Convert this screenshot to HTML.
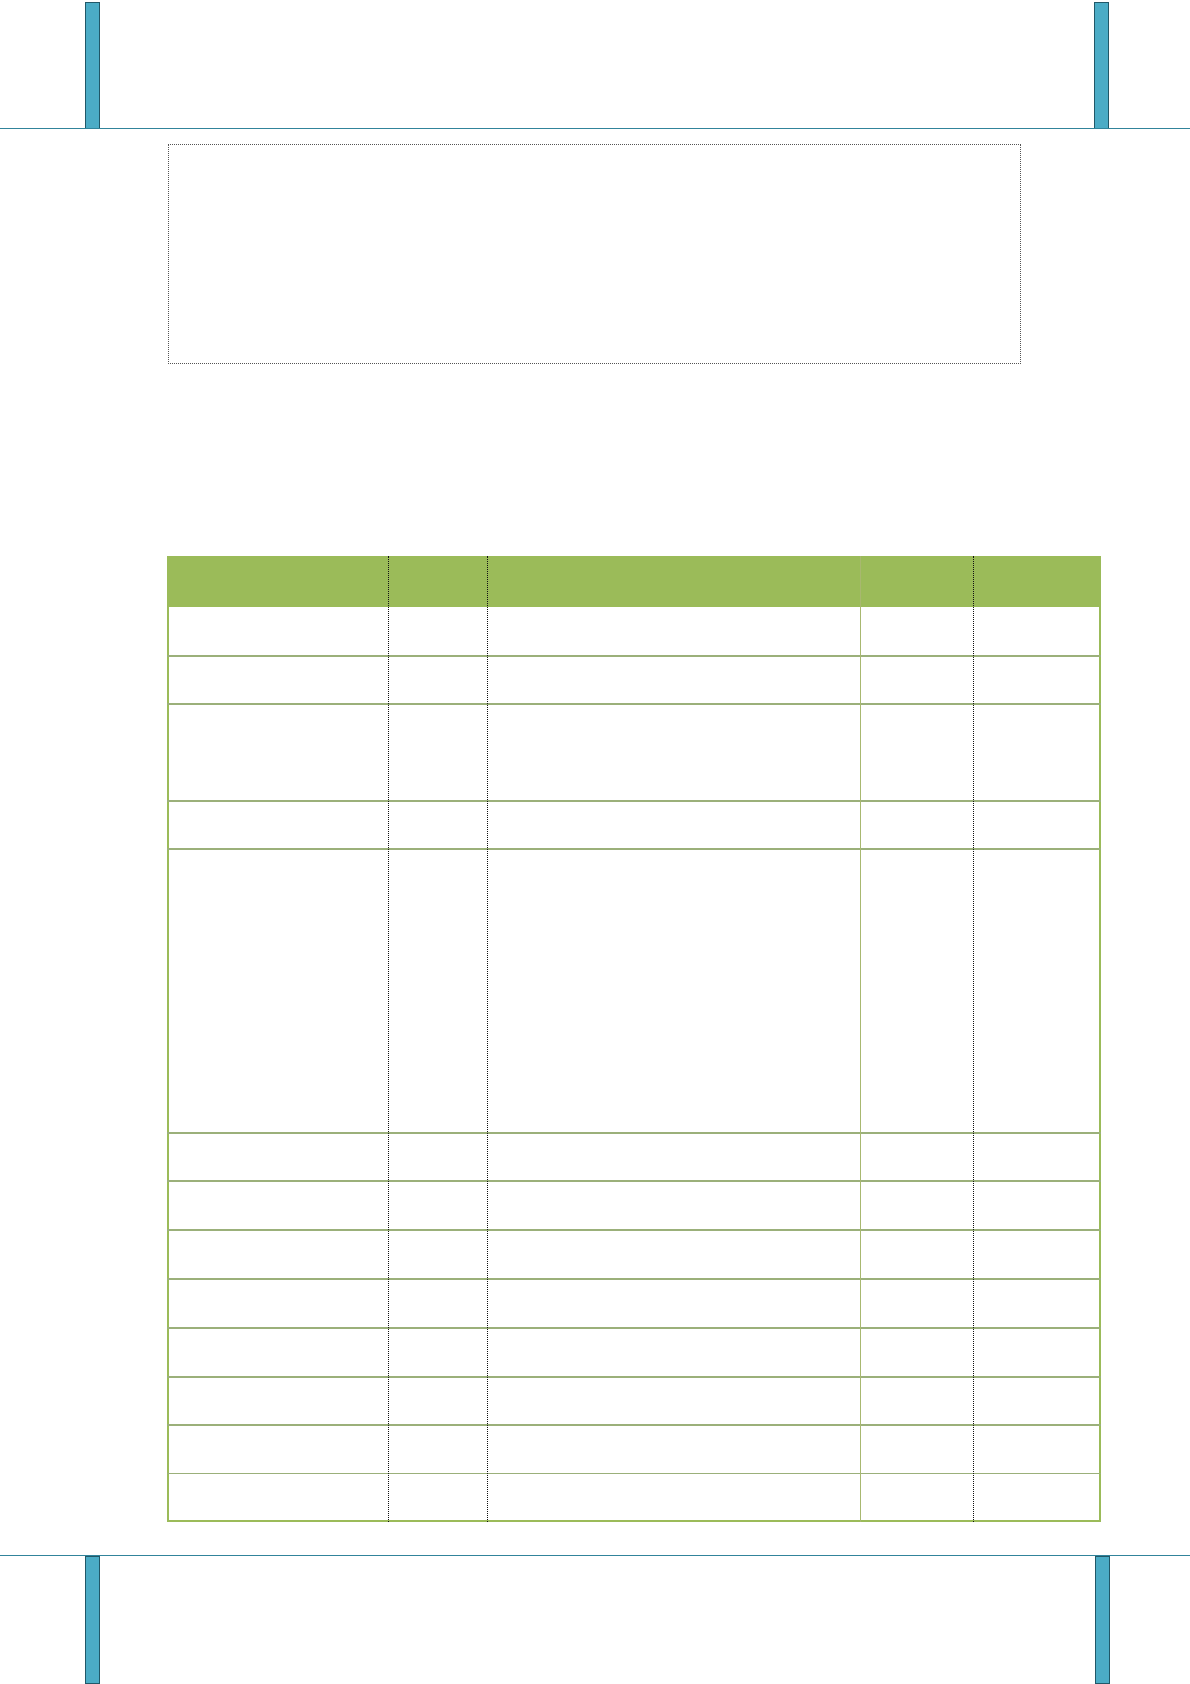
<!DOCTYPE html><html><head><style>
body{margin:0;width:1190px;height:1684px;position:relative;background:#fff;overflow:hidden}
div{position:absolute;box-sizing:border-box}
.bar{background:#4bacc6;border:1px solid #215868;width:15px}
.h{height:2px;background:#9bb07a;left:167px;width:934px}
.v{width:0;top:556px;height:966px;border-left:1px dotted #111}
</style></head><body>
<div class="bar" style="left:85px;top:2px;height:127px"></div>
<div class="bar" style="left:1094px;top:2px;height:127px"></div>
<div style="left:0;top:128px;width:1190px;height:1px;background:#31849b"></div>
<div style="left:168px;top:144px;width:853px;height:220px;border:1px dotted #555"></div>
<div style="left:167px;top:556px;width:934px;height:51px;background:#9bbb59"></div>
<div style="left:167px;top:556px;width:934px;height:966px;border:2px solid #9bbb59;border-top:0"></div>
<div class="h" style="top:655px"></div><div class="h" style="top:703px"></div><div class="h" style="top:800px"></div>
<div class="h" style="top:848px"></div><div class="h" style="top:1132px"></div><div class="h" style="top:1180px"></div>
<div class="h" style="top:1229px"></div><div class="h" style="top:1278px"></div><div class="h" style="top:1327px"></div>
<div class="h" style="top:1376px"></div><div class="h" style="top:1424px"></div><div class="h" style="top:1473px;height:1px"></div>
<div class="v" style="left:388px"></div>
<div class="v" style="left:487px"></div>
<div style="left:860px;top:556px;width:1px;height:966px;background:#a8b870"></div>
<div class="v" style="left:973px"></div>
<div style="left:0;top:1555px;width:1190px;height:1px;background:#31849b"></div>
<div class="bar" style="left:85px;top:1556px;height:128px"></div>
<div class="bar" style="left:1095px;top:1556px;height:128px"></div>
</body></html>
